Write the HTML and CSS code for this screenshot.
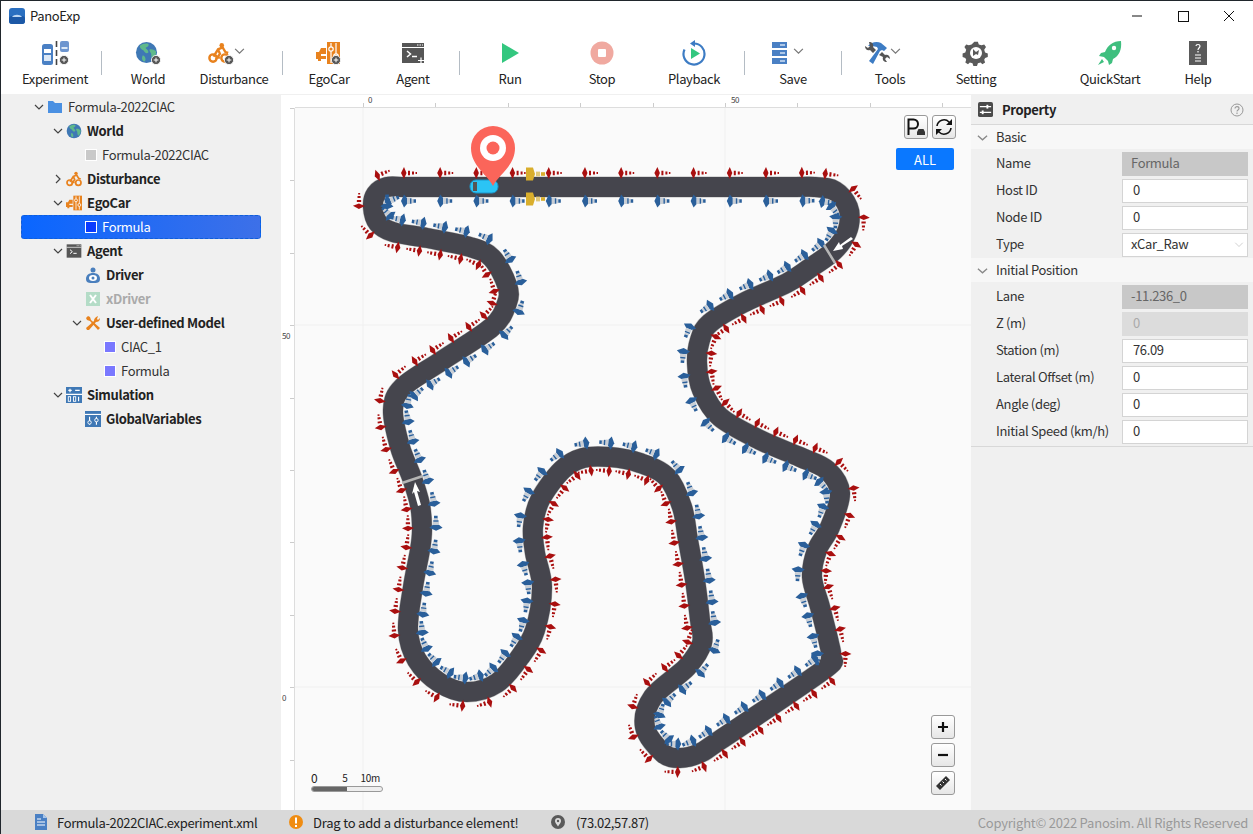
FILE: index.html
```html
<!DOCTYPE html>
<html lang="en">
<head>
    <meta charset="UTF-8">
    <title>PanoExp</title>
    <link rel="stylesheet" href="styles.css">
</head>
<body>
    <svg class="sprite" aria-hidden="true">
        <symbol id="i-plus" viewBox="0 0 12 12">
            <circle cx="6" cy="6" r="5.5" fill="#555" stroke="#fff" stroke-width="1"/>
            <path d="M3.2 6h5.6M6 3.2v5.6" stroke="#fff" stroke-width="1.2"/>
        </symbol>
        <symbol id="i-world" viewBox="0 0 24 24">
            <circle cx="12" cy="12" r="11" fill="#3f78b5"/>
            <path d="M5 5c3-2 6-3 9-2 1 2-1 3-3 4 1 2 3 2 3 5-2 2-4 0-5-2-2-1-4-2-4-5zM15 9c2-1 5 0 7 2 0 3-1 6-3 8-2-1-2-3-2-5s-2-3-2-5zM8 15c2 0 3 2 3 4 0 1-1 3-2 2-2-1-2-4-1-6z" fill="#5fb98b"/>
        </symbol>
        <symbol id="i-bike" viewBox="0 0 24 24">
            <circle cx="5.5" cy="17.5" r="4" fill="none" stroke="#e8821e" stroke-width="2.6"/>
            <circle cx="18.5" cy="17.5" r="4" fill="none" stroke="#e8821e" stroke-width="2.6"/>
            <circle cx="15" cy="3.5" r="2.5" fill="#e8821e"/>
            <path d="M6 16l5-8 5-2 3 5 3 1M11 8l2 5-3 4h3" fill="none" stroke="#e8821e" stroke-width="2.6"/>
        </symbol>
        <symbol id="i-ego" viewBox="0 0 24 24">
            <rect x="11" y="1" width="13" height="22" fill="#e8821e"/>
            <path d="M15 2v20M20 2v20" stroke="#fff" stroke-width="1.2"/>
            <circle cx="15" cy="8" r="2.2" fill="#e8821e" stroke="#fff" stroke-width="1.2"/>
            <circle cx="20" cy="15" r="2.2" fill="#e8821e" stroke="#fff" stroke-width="1.2"/>
            <path d="M10 7H5L3 11H0v7h2v2h3v-2h5v-3H5v-2h5z" fill="#e8821e"/>
        </symbol>
        <symbol id="i-term" viewBox="0 0 24 22">
            <rect x="1" y="1" width="22" height="20" fill="#565656"/>
            <path d="M1 5.5h22" stroke="#fff" stroke-width="1"/>
            <path d="M16 3h1.500M18.500 3h1.500M21 3h1" stroke="#fff" stroke-width="1"/>
            <path d="M6 9l3.500 3-3.500 3M11 14.500h5" fill="none" stroke="#fff" stroke-width="1.500"/>
        </symbol>
    </svg>

    <div class="app">
        <header class="titlebar">
            <svg class="app-logo" viewBox="0 0 16 16"><rect width="16" height="16" rx="3" fill="#2a6fc0"/><rect y="8" width="16" height="8" rx="3" fill="#1c58a6"/><path d="M3 9c2-3 8-3 10 0z" fill="#bcd6f2"/></svg>
            <span class="app-name">PanoExp</span>
            <div class="win-btns">
                <svg class="win-btn" viewBox="0 0 46 30"><path d="M18 15h10" stroke="#111"/></svg>
                <svg class="win-btn" viewBox="0 0 46 30"><rect x="18.500" y="10.500" width="10" height="10" fill="none" stroke="#111"/></svg>
                <svg class="win-btn" viewBox="0 0 46 30"><path d="M18 10l10 10M28 10L18 20" stroke="#111"/></svg>
            </div>
        </header>

        <nav class="toolbar">
            <div class="tool w-90">
                <svg class="tool-icon" viewBox="0 0 28 26">
                    <rect x="1" y="4" width="11" height="21" rx="2.500" fill="#4a80c4"/>
                    <rect x="3" y="9" width="7" height="4" fill="#fff"/><rect x="3" y="15" width="7" height="6" fill="#dce8f6"/>
                    <path d="M15.500 1v6M15.500 10v6M15.500 19v6" stroke="#444" stroke-width="1.600"/>
                    <rect x="19" y="1" width="9" height="11" rx="2" fill="#6d95cf"/><rect x="20.500" y="7" width="6" height="2" fill="#dce8f6"/>
                    <use href="#i-plus" x="18" y="15" width="10" height="10"/>
                </svg>
                <span>Experiment</span>
            </div>
            <div class="sep sep-first"></div>
            <div class="tool w-92">
                <svg class="tool-icon" viewBox="0 0 28 26"><use href="#i-world" x="1" y="1" width="23" height="23"/><use href="#i-plus" x="17" y="15" width="10" height="10"/></svg>
                <span>World</span>
            </div>
            <div class="tool w-80">
                <div class="tool-row">
                    <svg class="tool-icon" viewBox="0 0 28 26"><use href="#i-bike" x="1" y="2" width="22" height="22"/><use href="#i-plus" x="17" y="15" width="10" height="10"/></svg>
                    <svg class="chev" viewBox="0 0 12 8"><path d="M1 1l5 5 5-5" fill="none" stroke="#777" stroke-width="1.400"/></svg>
                </div>
                <span>Disturbance</span>
            </div>
            <div class="sep sep-gap"></div>
            <div class="tool w-92">
                <svg class="tool-icon" viewBox="0 0 28 26"><use href="#i-ego" x="1" y="1" width="24" height="24"/><use href="#i-plus" x="16" y="15" width="10" height="10"/></svg>
                <span>EgoCar</span>
            </div>
            <div class="tool w-76">
                <svg class="tool-icon" viewBox="0 0 28 26"><use href="#i-term" x="2" y="2" width="24" height="22"/><path d="M19 20.500h6M22 17.500v6" stroke="#fff" stroke-width="1.200"/></svg>
                <span>Agent</span>
            </div>
            <div class="sep sep-gap"></div>
            <div class="tool w-100">
                <svg class="tool-icon" viewBox="0 0 28 26"><path d="M6 3l17 10L6 23z" fill="#33c77f"/></svg>
                <span>Run</span>
            </div>
            <div class="tool w-84">
                <svg class="tool-icon" viewBox="0 0 28 26"><circle cx="14" cy="13" r="11.500" fill="#f0a9a0"/><rect x="10" y="9" width="8" height="8" rx="1" fill="#fff"/></svg>
                <span>Stop</span>
            </div>
            <div class="tool w-100">
                <svg class="tool-icon" viewBox="0 0 28 26"><path d="M14 3.500a10.500 10.500 0 1 1-9.500 6" fill="none" stroke="#3d7cc4" stroke-width="2.200"/><path d="M15 0v7l-5-3.500z" fill="#3d7cc4"/><path d="M11 8l9 5.500-9 5.500z" fill="#33c77f"/></svg>
                <span>Playback</span>
            </div>
            <div class="sep"></div>
            <div class="tool w-96">
                <div class="tool-row">
                    <svg class="tool-icon" viewBox="0 0 28 26">
                        <rect x="6" y="2" width="15" height="6" fill="#4a80c4"/><rect x="6" y="10" width="15" height="6" fill="#4a80c4"/><rect x="6" y="18" width="15" height="6" fill="#4a80c4"/>
                        <path d="M14 5h5M14 13h5M14 21h5" stroke="#cfe0f4" stroke-width="1.400"/>
                    </svg>
                    <svg class="chev" viewBox="0 0 12 8"><path d="M1 1l5 5 5-5" fill="none" stroke="#777" stroke-width="1.400"/></svg>
                </div>
                <span>Save</span>
            </div>
            <div class="sep"></div>
            <div class="tool w-96">
                <div class="tool-row">
                    <svg class="tool-icon" viewBox="0 0 28 26">
                        <path d="M5 6c3-4 9-5 13-3l6 5-3 3-2-1-2 1L10 24l-4-3 9-12-1-2c-3-1-6-1-9-1z" fill="#3d7cc4"/>
                        <path d="M6 2c3 0 5 2 4 5l3 3-3 3-3-3c-3 1-5-1-5-4l3 2 2-2zM16 15l3-3 3 3c3-1 5 1 5 4l-3-2-2 2 2 3c-3 0-5-2-4-5z" fill="#555"/>
                    </svg>
                    <svg class="chev" viewBox="0 0 12 8"><path d="M1 1l5 5 5-5" fill="none" stroke="#777" stroke-width="1.400"/></svg>
                </div>
                <span>Tools</span>
            </div>
            <div class="tool w-76">
                <svg class="tool-icon" viewBox="0 0 28 26">
                    <path d="M12 1h4l1 3 3 1 3-1 2 3-2 3 1 3 3 1v4l-3 1-1 2 1 3-3 2-2-2-3 1-1 3h-4l-1-3-3-1-2 2-3-2 1-3-1-2-3-1v-4l3-1 1-3-2-3 2-3 3 1 3-1z" fill="#5a5a5a" transform="translate(1.500 .8) scale(.9)"/>
                    <circle cx="14" cy="13" r="6" fill="#fff"/>
                    <path d="M11 9l3 3 3-2-1 5-2-1-3 2z" fill="#5a5a5a"/>
                </svg>
                <span>Setting</span>
            </div>
            <div class="tool w-80 push-56">
                <svg class="tool-icon" viewBox="0 0 28 26"><path d="M25 1c-8 0-13 4-16 11l-4 1-2 3 5 1 4 4 1 4 3-2 1-4c6-3 9-9 8-18z" fill="#3fbf7f"/><circle cx="18" cy="8" r="2.200" fill="#fff"/><path d="M6 19l-4 6 6-3z" fill="#3fbf7f"/></svg>
                <span>QuickStart</span>
            </div>
            <div class="tool w-80 push-8">
                <svg class="tool-icon" viewBox="0 0 28 26"><rect x="5" y="1" width="18" height="24" fill="#5a5a5a"/><path d="M11 15h6M11 18h6M11 21h6" stroke="#fff" stroke-width="1.200"/><path d="M12 6c0-2 4-2 4 0 0 2-2 2-2 4M14 11v1.500" fill="none" stroke="#fff" stroke-width="1.200"/></svg>
                <span>Help</span>
            </div>
        </nav>

        <main class="workspace">
            <aside class="tree">
                <div class="node lv0"><svg class="arrow" viewBox="0 0 12 12"><path d="M2 4l4 4 4-4" fill="none" stroke="#444" stroke-width="1.200"/></svg>
                    <svg class="node-icon" viewBox="0 0 16 14"><path d="M1 1h5l2 2h7v10H1z" fill="#4a90e2"/></svg><span class="label">Formula-2022CIAC</span></div>
                <div class="node lv1 bold"><svg class="arrow" viewBox="0 0 12 12"><path d="M2 4l4 4 4-4" fill="none" stroke="#444" stroke-width="1.200"/></svg>
                    <svg class="node-icon" viewBox="0 0 24 24"><use href="#i-world"/></svg><span class="label">World</span></div>
                <div class="node lv2 leaf"><span class="arrow"></span><span class="swatch sw-grey"></span><span class="label">Formula-2022CIAC</span></div>
                <div class="node lv1 bold"><svg class="arrow" viewBox="0 0 12 12"><path d="M4 2l4 4-4 4" fill="none" stroke="#444" stroke-width="1.200"/></svg>
                    <svg class="node-icon" viewBox="0 0 24 24"><use href="#i-bike"/></svg><span class="label">Disturbance</span></div>
                <div class="node lv1 bold"><svg class="arrow" viewBox="0 0 12 12"><path d="M2 4l4 4 4-4" fill="none" stroke="#444" stroke-width="1.200"/></svg>
                    <svg class="node-icon" viewBox="0 0 24 24"><use href="#i-ego"/></svg><span class="label">EgoCar</span></div>
                <div class="node lv2 leaf selected"><span class="arrow"></span><span class="swatch sw-blue"></span><span class="label">Formula</span></div>
                <div class="node lv1 bold"><svg class="arrow" viewBox="0 0 12 12"><path d="M2 4l4 4 4-4" fill="none" stroke="#444" stroke-width="1.200"/></svg>
                    <svg class="node-icon" viewBox="0 0 24 22"><use href="#i-term"/></svg><span class="label">Agent</span></div>
                <div class="node lv2 bold"><span class="arrow"></span>
                    <svg class="node-icon" viewBox="0 0 16 16"><circle cx="8" cy="3" r="2.500" fill="#4a7fbd"/><path d="M1 12c0-4 3-6 7-6s7 2 7 6-3 4-7 4-7 0-7-4z" fill="#4a7fbd"/><ellipse cx="8" cy="11" rx="4" ry="3" fill="#fff"/><circle cx="8" cy="11" r="1.500" fill="#4a7fbd"/></svg><span class="label">Driver</span></div>
                <div class="node lv2 bold muted"><span class="arrow"></span>
                    <svg class="node-icon" viewBox="0 0 16 16"><rect x="1" y="1" width="14" height="14" fill="#b4dcc7"/><path d="M5 4l6 8M11 4l-6 8" stroke="#fff" stroke-width="2"/></svg><span class="label">xDriver</span></div>
                <div class="node lv2 bold"><svg class="arrow" viewBox="0 0 12 12"><path d="M2 4l4 4 4-4" fill="none" stroke="#444" stroke-width="1.200"/></svg>
                    <svg class="node-icon" viewBox="0 0 16 16"><path d="M1 3l2-2 2 1 1 3 9 8-2 2-8-9-3-1z" fill="#e8821e"/><path d="M15 3c0 3-2 4-4 4L4 15l-2 0-1-2 8-7c0-2 1-4 4-5l-1 3 1 1z" fill="#e8821e"/></svg><span class="label">User-defined Model</span></div>
                <div class="node lv3 leaf"><span class="arrow"></span><span class="swatch sw-violet"></span><span class="label">CIAC_1</span></div>
                <div class="node lv3 leaf"><span class="arrow"></span><span class="swatch sw-violet"></span><span class="label">Formula</span></div>
                <div class="node lv1 bold"><svg class="arrow" viewBox="0 0 12 12"><path d="M2 4l4 4 4-4" fill="none" stroke="#444" stroke-width="1.200"/></svg>
                    <svg class="node-icon" viewBox="0 0 14 14"><rect width="14" height="14" fill="#3f78b5"/><path d="M2 3h3M3.500 1.500v3M8 3h4M0 6.500h14" stroke="#fff"/><rect x="2" y="8.500" width="2" height="4" fill="none" stroke="#fff" stroke-width=".8"/><rect x="6.500" y="8.500" width="2" height="4" fill="none" stroke="#fff" stroke-width=".8"/><path d="M11 8.500v4" stroke="#fff"/></svg><span class="label">Simulation</span></div>
                <div class="node lv2 bold"><span class="arrow"></span>
                    <svg class="node-icon" viewBox="0 0 14 14"><rect width="14" height="14" fill="#3f78b5"/><path d="M0 3h14" stroke="#fff"/><path d="M4 5v7M10 5v7" stroke="#fff"/><circle cx="4" cy="10" r="1.500" fill="#3f78b5" stroke="#fff" stroke-width=".8"/><circle cx="10" cy="8" r="1.500" fill="#3f78b5" stroke="#fff" stroke-width=".8"/></svg><span class="label">GlobalVariables</span></div>
            </aside>

            <section class="canvas">
                <div class="corner"></div>
                <div class="ruler ruler-top"><span class="tick-label at-0">0</span><span class="tick-label at-50">50</span></div>
                <div class="ruler ruler-left"><span class="side-label at-y50">50</span><span class="side-label at-y0">0</span></div>
                <div class="stage">
                    <svg class="map" viewBox="295 108 676 702">
                        <defs>
                            <g id="cone-red">
                                <path d="M-4 0L-1-5 1.500 0-1 5z" fill="#a90f0f"/>
                                <path d="M3-1.800h2v3.600H3zM7-1.300h2v2.600H7zM10.500-.8h1.500v1.600H10.500z" fill="#a90f0f"/>
                            </g>
                            <g id="cone-blue">
                                <path d="M-4 0L-1-5.500 2-2.500V2.500L-1 5.500z" fill="#2a5f9a"/>
                                <path d="M2-2.500h3v5H2zM6.500-1.800h2v3.600H6.500z" fill="#c9ced4"/>
                                <path d="M5-2.200h1.500v4.400H5zM8.500-1.500h2.500v3H8.500z" fill="#2a5f9a"/>
                            </g>
                            <g id="cone-yellow">
                                <path d="M-4-5.500L3-5.500 5 0 3 5.500-4 5.500z" fill="#d9ae2c"/>
                                <rect x="6" y="-2" width="4" height="4" fill="#e0c878"/><rect x="11" y="-1.500" width="4" height="3" fill="#d9ae2c"/>
                            </g>
                        </defs>
                        <path class="grid-line" d="M363 108V810M725 108V810M295 325H971M295 687H971"/>
                        <path id="road-edge" class="road-edge"/>
                        <path id="road" class="road"/>
                        <g id="cones"></g>
                        <path d="M824 245l11 18M402 483l21-7" stroke="#b5b5b5" stroke-width="2.500"/>
                        <path d="M853 239l-11 7 1 3-10 2 6-9 1 3 11-8z" fill="#fff"/>
                        <path d="M415 482l5 10-3-1 4 14-3 1-4-14-2 2z" fill="#fff"/>
                        <rect x="470" y="180" width="28" height="13" rx="6" fill="#2bc4f5" stroke="#1c94c8"/>
                        <rect x="473" y="182" width="4" height="9" fill="#555"/>
                        <path d="M493 186c-6-12-22-20-22-38a22 22 0 0 1 44 0c0 18-16 26-22 38z" fill="#fb655a"/>
                        <circle cx="493" cy="148" r="13" fill="#fff"/>
                        <circle cx="493" cy="148" r="6.500" fill="#fb655a"/>
                    </svg>
                    <button class="map-btn btn-park">
                        <svg viewBox="0 0 22 22"><path d="M3.500 19V3.500h5a4 4 0 0 1 0 9h-5" fill="none" stroke="#111" stroke-width="2"/><path d="M12 19v-3l1.500-3h5l1.500 3v3z" fill="#333"/></svg>
                    </button>
                    <button class="map-btn btn-refresh">
                        <svg viewBox="0 0 22 22"><path d="M4 10a7 7 0 0 1 12-4l2 2M18 12a7 7 0 0 1-12 4l-2-2" fill="none" stroke="#111" stroke-width="1.600"/><path d="M19 3v6h-6zM3 19v-6h6z" fill="#111"/></svg>
                    </button>
                    <button class="all-btn">ALL</button>
                    <div class="zoom-btns">
                        <button class="map-btn"><svg viewBox="0 0 22 22"><path d="M6 11h10M11 6v10" stroke="#111" stroke-width="2.200"/></svg></button>
                        <button class="map-btn"><svg viewBox="0 0 22 22"><path d="M6 11h10" stroke="#111" stroke-width="2.200"/></svg></button>
                        <button class="map-btn"><svg viewBox="0 0 22 22"><path d="M4 14L14 4l4 4L8 18z" fill="#333"/><path d="M8 12l1.500 1.500M10.500 9.500L12 11M13 7l1.500 1.500" stroke="#fff"/></svg></button>
                    </div>
                    <div class="scale">
                        <div class="scale-nums"><span class="num-0">0</span><span class="num-5">5</span><span>10m</span></div>
                        <div class="scale-bar"><div class="scale-fill"></div></div>
                    </div>
                </div>
            </section>

            <aside class="props">
                <div class="props-head">
                    <svg class="props-icon" viewBox="0 0 16 16"><rect width="16" height="16" rx="2" fill="#4a4a4a"/><path d="M2 5h12M2 11h12" stroke="#fff" stroke-width="1.400"/><rect x="9" y="3" width="2" height="4" fill="#fff"/><rect x="4" y="9" width="2" height="4" fill="#fff"/></svg>
                    <strong>Property</strong>
                    <svg class="help-icon" viewBox="0 0 14 14"><circle cx="7" cy="7" r="6" fill="none" stroke="#999"/><path d="M5 5.500c0-2.500 4-2.500 4 0 0 1.500-2 1.500-2 3M7 9.500V11" fill="none" stroke="#999" stroke-width="1.100"/></svg>
                </div>
                <div class="group"><svg class="group-arrow" viewBox="0 0 12 12"><path d="M1 4l5 4.500L11 4" fill="none" stroke="#888" stroke-width="1.400"/></svg><span class="label">Basic</span></div>
                <div class="prop"><label class="label">Name</label><div class="field readonly">Formula</div></div>
                <div class="prop"><label class="label">Host ID</label><div class="field indent">0</div></div>
                <div class="prop"><label class="label">Node ID</label><div class="field indent">0</div></div>
                <div class="prop"><label class="label">Type</label><div class="field">xCar_Raw<svg class="select-arrow" viewBox="0 0 12 8"><path d="M1 1l5 5 5-5" fill="none" stroke="#ccc" stroke-width="1.200"/></svg></div></div>
                <div class="group"><svg class="group-arrow" viewBox="0 0 12 12"><path d="M1 4l5 4.500L11 4" fill="none" stroke="#888" stroke-width="1.400"/></svg><span class="label">Initial Position</span></div>
                <div class="prop"><label class="label">Lane</label><div class="field readonly">-11.236_0</div></div>
                <div class="prop"><label class="label">Z (m)</label><div class="field disabled indent">0</div></div>
                <div class="prop"><label class="label">Station (m)</label><div class="field indent">76.09</div></div>
                <div class="prop"><label class="label">Lateral Offset (m)</label><div class="field indent">0</div></div>
                <div class="prop"><label class="label">Angle (deg)</label><div class="field indent">0</div></div>
                <div class="prop"><label class="label">Initial Speed (km/h)</label><div class="field indent">0</div></div>
                <div class="props-end"></div>
            </aside>
        </main>

        <footer class="statusbar">
            <svg class="st-icon st-doc" viewBox="0 0 14 16"><path d="M1 0h8l4 4v12H1z" fill="#4a80c4"/><path d="M9 0v4h4z" fill="#a9c6ea"/><path d="M3 8h8M3 11h8M3 5h4" stroke="#fff"/></svg>
            <span class="st-file">Formula-2022CIAC.experiment.xml</span>
            <svg class="st-icon" viewBox="0 0 14 14"><circle cx="7" cy="7" r="7" fill="#ef8c12"/><path d="M7 2.500v6M7 10v2" stroke="#fff" stroke-width="2"/></svg>
            <span class="st-msg">Drag to add a disturbance element!</span>
            <svg class="st-icon" viewBox="0 0 14 14"><circle cx="7" cy="7" r="7" fill="#5a5a5a"/><path d="M7 11.500C5 8.500 4 7.500 4 6a3 3 0 0 1 6 0c0 1.500-1 2.500-3 5.500z" fill="#ddd"/><circle cx="7" cy="6" r="1.200" fill="#5a5a5a"/></svg>
            <span class="st-coord">(73.02,57.87)</span>
            <span class="st-copy">Copyright© 2022 Panosim. All Rights Reserved</span>
        </footer>
    </div>

    <script src="track.js"></script>
</body>
</html>
```

FILE: styles.css
```css
* {
    box-sizing: border-box;
}
html, body {
    margin: 0;
    height: 100%;
    overflow: hidden;
}
body {
    font-family: "Noto Sans CJK SC", "Noto Sans", Arial, sans-serif;
    font-size: 13px;
    letter-spacing: -0.35px;
    color: #222;
    background-color: #fff;
}
.sprite {
    display: none;
}
.app {
    display: flex;
    flex-direction: column;
    height: 100vh;
    border-top: 1px solid #20262c;
    border-left: 1px solid #20262c;
}
.label {
    margin-bottom: 2px;
}

/* title bar */
.titlebar {
    display: flex;
    align-items: center;
    height: 29px;
    padding-left: 8px;
}
.app-logo {
    width: 16px;
    height: 16px;
}
.app-name {
    margin-left: 5px;
}
.win-btns {
    display: flex;
    margin-left: auto;
    margin-right: 1px;
}
.win-btn {
    width: 46px;
    height: 30px;
}

/* toolbar */
.toolbar {
    display: flex;
    height: 65px;
    padding-left: 9px;
    border-bottom: 1px solid #f0f0f0;
}
.tool {
    display: flex;
    flex-direction: column;
    align-items: center;
    padding-top: 10px;
    white-space: nowrap;
}
.tool span {
    margin-top: 4px;
    line-height: 18px;
    color: #222;
}
.tool-row {
    display: flex;
    align-items: center;
    position: relative;
    margin-right: 27px;
}
.tool-icon {
    width: 28px;
    height: 26px;
}
.chev {
    position: absolute;
    left: 27px;
    top: 8px;
    width: 11px;
    height: 7px;
}
.w-76 { width: 76px; }
.w-80 { width: 80px; }
.w-84 { width: 84px; }
.w-90 { width: 90px; }
.w-92 { width: 92px; }
.w-96 { width: 96px; }
.w-100 { width: 100px; }
.push-56 { margin-left: 56px; }
.push-8 { margin-left: 8px; }
.sep {
    width: 1px;
    height: 24px;
    margin-top: 21px;
    background-color: #b4bcc4;
}
.sep-first {
    margin-left: 1px;
}
.sep-gap {
    margin-left: 8px;
}

/* layout */
.workspace {
    display: flex;
    flex: 1;
    min-height: 0;
}

/* tree */
.tree {
    width: 280px;
    flex-shrink: 0;
    background-color: #f0f0f0;
}
.node {
    display: flex;
    align-items: center;
    height: 24px;
    color: #333;
    white-space: nowrap;
}
.lv0 { padding-left: 32px; }
.lv1 { padding-left: 51px; }
.lv2 { padding-left: 70px; }
.lv3 { padding-left: 89px; }
.arrow {
    width: 12px;
    height: 12px;
    margin-right: 2px;
    flex-shrink: 0;
}
.node-icon {
    width: 16px;
    height: 16px;
    margin-right: 5px;
    flex-shrink: 0;
}
.swatch {
    width: 12px;
    height: 12px;
    margin-right: 5px;
    border: 1px solid #fff;
    flex-shrink: 0;
}
.sw-grey { background-color: #c9c9c9; }
.sw-blue { background-color: #0a3cff; }
.sw-violet { background-color: #7a78ff; }
.bold {
    font-weight: 700;
    color: #222;
}
.muted {
    color: #aaa;
}
.selected {
    margin-left: 20px;
    margin-right: 20px;
    padding-left: 49px;
    border: 1px dashed #0f5fd8;
    border-radius: 3px;
    background: linear-gradient(90deg, #0a66ff, #3d70e8);
    color: #fff;
}

/* map */
.canvas {
    flex: 1;
    display: grid;
    grid-template-columns: 14px 1fr;
    grid-template-rows: 13px 1fr;
    min-width: 0;
    background-color: #fafafa;
}
.corner,
.ruler {
    position: relative;
    background-color: #fff;
}
.ruler-top {
    border-bottom: 1px solid #ddd;
    background-image: repeating-linear-gradient(90deg, #ccc 0 1px, transparent 1px 72.4px);
    background-position: 68px 8px;
    background-repeat: no-repeat;
    background-size: 100% 4px;
}
.ruler-left {
    border-right: 1px solid #ddd;
    background-image: repeating-linear-gradient(180deg, #ccc 0 1px, transparent 1px 72.4px);
    background-position: 9px 0;
    background-repeat: no-repeat;
    background-size: 4px 100%;
}
.tick-label,
.side-label {
    position: absolute;
    font-size: 8px;
    line-height: 10px;
    color: #444;
}
.tick-label { top: 0; }
.at-0 { left: 73px; }
.at-50 { left: 436px; }
.side-label { left: 1px; }
.at-y50 { top: 223px; }
.at-y0 { top: 585px; }
.stage {
    position: relative;
    overflow: hidden;
}
.map {
    position: absolute;
    left: 0;
    top: 0;
    width: 676px;
    height: 702px;
}
.grid-line {
    fill: none;
    stroke: #f0f0f0;
}
.road-edge {
    fill: none;
    stroke: #b8b8b8;
    stroke-width: 21;
}
.road {
    fill: none;
    stroke: #45454d;
    stroke-width: 20;
}
.map-btn {
    display: block;
    width: 24px;
    height: 24px;
    padding: 0;
    border: 1px solid #999;
    border-radius: 3px;
    background: linear-gradient(#fff, #e6e6e6);
}
.map-btn svg {
    display: block;
    width: 22px;
    height: 22px;
}
.btn-park,
.btn-refresh,
.all-btn,
.zoom-btns,
.scale {
    position: absolute;
}
.btn-park { left: 609px; top: 7px; }
.btn-refresh { left: 637px; top: 7px; }
.all-btn {
    left: 601px;
    top: 40px;
    width: 58px;
    height: 22px;
    padding: 0;
    border: none;
    border-radius: 2px;
    background-color: #0a78ff;
    color: #fff;
    font-family: inherit;
    font-size: 13px;
}
.zoom-btns {
    left: 636px;
    top: 607px;
    display: flex;
    flex-direction: column;
    gap: 4px;
}
.scale {
    left: 16px;
    top: 663px;
    width: 72px;
}
.scale-nums {
    display: flex;
    align-items: flex-end;
    font-size: 10px;
    line-height: 14px;
}
.num-0 {
    font-size: 12px;
    margin-left: 0;
}
.num-5 {
    margin-left: 25px;
    margin-right: 13px;
}
.scale-bar {
    height: 6px;
    margin-top: 1px;
    border: 1px solid #999;
    border-radius: 3px;
    background-color: #eee;
    overflow: hidden;
}
.scale-fill {
    width: 50%;
    height: 100%;
    background-color: #666;
}

/* property panel */
.props {
    width: 282px;
    flex-shrink: 0;
    background-color: #f0f0f0;
}
.props-head {
    display: flex;
    align-items: center;
    height: 30px;
    padding: 0 9px 0 7px;
    border-bottom: 1px solid #d8d8d8;
}
.props-icon {
    width: 15px;
    height: 15px;
    margin-right: 9px;
}
.help-icon {
    width: 14px;
    height: 14px;
    margin-left: auto;
}
.group {
    display: flex;
    align-items: center;
    height: 24px;
    padding-left: 6px;
    background-color: #f7f7f7;
    color: #333;
}
.group-arrow {
    width: 11px;
    height: 11px;
    margin-right: 8px;
}
.prop {
    display: flex;
    align-items: center;
    height: 27px;
    padding-left: 25px;
    padding-right: 5px;
}
.prop label {
    flex: 1;
    color: #333;
    white-space: nowrap;
}
.field {
    position: relative;
    width: 126px;
    height: 24px;
    padding-left: 8px;
    line-height: 20px;
    border: 1px solid #d4d4d4;
    background-color: #fff;
    color: #333;
}
.indent {
    padding-left: 10px;
}
.readonly {
    background-color: #c8c8c8;
    border-color: #c8c8c8;
    color: #666;
}
.disabled {
    background-color: #dcdcdc;
    border-color: #dcdcdc;
    color: #aaa;
}
.select-arrow {
    position: absolute;
    right: 3px;
    top: 8px;
    width: 10px;
    height: 6px;
}
.group + .prop {
    margin-top: 1px;
}
.props-end {
    border-top: 1px solid #d8d8d8;
    margin-top: 1px;
}

/* status bar */
.statusbar {
    display: flex;
    align-items: center;
    height: 24px;
    padding-left: 33px;
    padding-right: 5px;
    background-color: #d9d9d9;
    white-space: nowrap;
}
.st-icon {
    width: 14px;
    height: 14px;
    flex-shrink: 0;
}
.st-doc {
    height: 16px;
}
.st-file { margin-left: 9px; width: 232px; }
.st-msg { margin-left: 10px; width: 238px; letter-spacing: -0.2px; }
.st-coord { margin-left: 11px; }
.st-copy {
    margin-left: auto;
    color: #999;
    letter-spacing: -0.2px;
}
```

FILE: track.js
```js
// centre line of the circuit, clockwise from the top straight
const pts = [
    [405,187],[440,187],[600,187],[780,187],[815,187],[835,191],[848,207],[849,225],[842,241],[830,254],
    [810,268],[787,283],[743,303],[710,323],[700,340],[697,363],[702,390],[720,417],[760,440],[800,457],
    [827,470],[840,493],[830,527],[817,550],[812,577],[820,607],[829,643],[831,658],[822,671],[720,740],
    [700,753],[680,758],[663,753],[645,727],[653,697],[687,667],[702,643],[700,620],[695,580],[688,540],
    [682,507],[667,477],[640,463],[610,457],[583,458],[562,470],[540,500],[533,527],[535,553],[542,587],
    [535,630],[520,657],[497,683],[467,692],[440,683],[417,660],[408,630],[413,587],[420,550],[422,530],
    [420,505],[412,478],[400,447],[393,410],[403,387],[443,360],[492,327],[507,303],[507,285],[492,258],
    [470,247],[427,238],[393,232],[378,223],[373,207],[376,194],[387,187]
];

function smoothPath(p) {
    const n = p.length;
    let d = "M" + p[0].join(" ");
    for (let i = 0; i < n; i++) {
        const a = p[(i - 1 + n) % n], b = p[i], c = p[(i + 1) % n], e = p[(i + 2) % n];
        const c1 = [b[0] + (c[0] - a[0]) / 6, b[1] + (c[1] - a[1]) / 6];
        const c2 = [c[0] - (e[0] - b[0]) / 6, c[1] - (e[1] - b[1]) / 6];
        d += "C" + c1.join(" ") + " " + c2.join(" ") + " " + c.join(" ");
    }
    return d + "Z";
}

const road = document.getElementById("road");
const cones = document.getElementById("cones");
const d = smoothPath(pts);
road.setAttribute("d", d);
document.getElementById("road-edge").setAttribute("d", d);

function addCone(kind, x, y, angle) {
    const use = document.createElementNS("http://www.w3.org/2000/svg", "use");
    use.setAttribute("href", "#cone-" + kind);
    use.setAttribute("transform", `translate(${x} ${y}) rotate(${angle}) scale(1 1.2)`);
    cones.appendChild(use);
}

const total = road.getTotalLength();
// cones stand further apart on the top straight
const straightEnd = 398;
for (let s = 0; s < total - 5; s += s < straightEnd ? 36.2 : 21.5) {
    const p = road.getPointAtLength(s);
    const q = road.getPointAtLength(s + 1);
    const dx = q.x - p.x, dy = q.y - p.y;
    const len = Math.hypot(dx, dy);
    const nx = dy / len, ny = -dx / len;
    const angle = Math.atan2(dy, dx) * 180 / Math.PI;
    addCone("red", p.x + nx * 14, p.y + ny * 14, angle);
    addCone("blue", p.x - nx * 14, p.y - ny * 14, angle);
}
// the pair of yellow cones on the top straight
addCone("yellow", 530, 174, 0);
addCone("yellow", 530, 199, 0);
```
